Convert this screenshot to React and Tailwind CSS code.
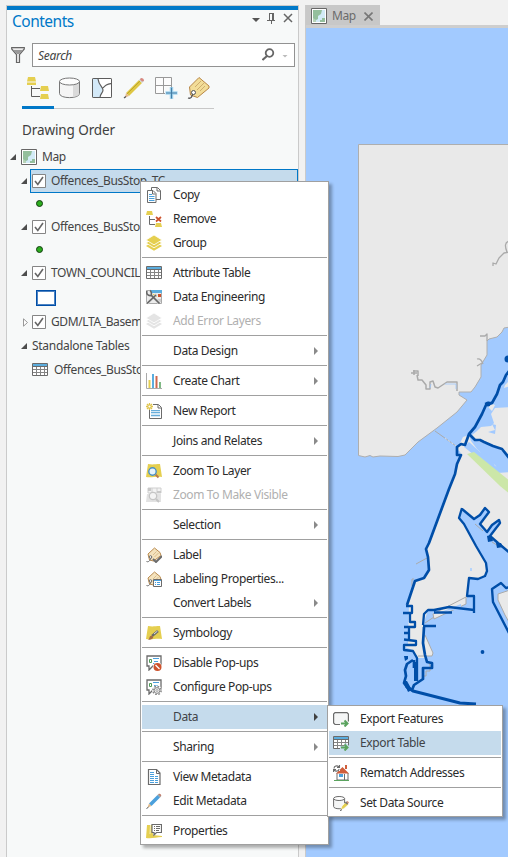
import React from "react";

const Icon = ({ children, size = 16 }) => (
  <svg width={size} height={size} viewBox="0 0 16 16" fill="none" className="block shrink-0">
    {children}
  </svg>
);

const G = "#6b6b6b";
const Y = "#e5cf50";

const Table = ({ arrow }) => (
  <Icon>
    <path d="M.5 1.5h15v12H.5z" fill="#fff" stroke={G} />
    <path d="M1 2h14v2H1z" fill="#5badde" />
    <path d="M0 4.5h16" stroke={G} />
    <path d="M1 7.5h14M1 10.5h14M4.5 5v8M8.5 5v8M12.5 5v8" stroke="#858585" />
    {arrow && <ExportArrow />}
  </Icon>
);

const ExportArrow = () => (
  <>
    <path d="M7 11h4V8.500h3L16 11v4h-2l-2 1h-1v-2H7z" fill="#c5dbec" />
    <path d="M8 12.500h6M11.500 9.500l3 3-3 3" stroke="#5ba35f" strokeWidth="2" />
  </>
);

const Layers = ({ color = Y, bg = "#fff" }) => (
  <Icon>
    <path d="M8 6l8 5-8 4.800L0 11z" fill={color} />
    <path d="M8 3l8 5-8 4.800L0 8z" fill={color} stroke={bg} strokeWidth=".8" />
    <path d="M8 0l8 5-8 4.800L0 5z" fill={color} stroke={bg} strokeWidth=".8" />
  </Icon>
);

const Tag = ({ children }) => (
  <Icon>
    <path d="M2 7L8.500 1l5.500 4.500 1 3L7.500 14l-4-1z" fill="#f5e3bd" stroke="#b98b50" />
    <path d="M7 8l3.500-3.500M8.500 10l4-4" stroke="#d9bd8d" />
    <path d="M.5 14.500c2 1 4-1 4.500-4" stroke={G} />
    <circle cx="4.500" cy="10" r="1.300" fill="#fff" stroke={G} />
    {children}
  </Icon>
);

const Popup = ({ children }) => (
  <Icon>
    <path d="M1 1h14v10H7l-4 4v-4H1z" fill="#fff" stroke={G} strokeWidth="1.300" />
    <path d="M3.500 4.500h2v3h-2z" stroke="#4f9a59" />
    <path d="M7 3.500h6M8 6.500h4M7 8.500h2" stroke="#4ba0dc" />
    {children}
  </Icon>
);

const icons = {
  copy: (
    <Icon>
      <path d="M5.500.5h6l3 3v9h-9z" fill="#fff" stroke={G} />
      <path d="M11 1v3h3" stroke={G} />
      <path d="M1.500 3.500H7l3 3v9H1.500z" fill="#fff" stroke={G} />
      <path d="M6.500 4v3h3" stroke={G} />
      <path d="M3 7.500h3M3 9.500h5.500M3 11.500h5.500M3 13.500h5.500" stroke="#4ba0dc" />
    </Icon>
  ),
  remove: (
    <Icon>
      <path d="M1 0h5l1 4H0z" fill={Y} />
      <path d="M3.500 5v8.500H9M3.500 8.500H9" stroke={G} />
      <path d="M10 12h5l1 4H9z" fill={Y} />
      <path d="M10 6l5 4.500M15 6l-5 4.500" stroke="#cd522c" strokeWidth="1.700" />
    </Icon>
  ),
  group: <Layers />,
  table: <Table />,
  engineering: (
    <Icon>
      <path d="M.5 1.500h15v13H.5z" fill="#ececec" stroke="#aaa" />
      <path d="M5 1h11v3H5z" fill="#5badde" />
      <path d="M7 5h4v3H7z" fill={Y} />
      <path d="M12 5h3v3h-3z" fill="#cd522c" />
      <path d="M10 10h5v3h-5z" fill="#ccc" />
      <path d="M1 14.500L11 5M5 6l8 8" stroke="#ddd" strokeWidth="3" />
      <path d="M1 14.500L10 6M5 6l8.500 8.500" stroke="#666" strokeWidth="1.700" />
      <path d="M1 2c-1 3 1 5 4 4.500 1-2 0-4.500-1-5" stroke="#666" strokeWidth="1.600" />
    </Icon>
  ),
  error: <Layers color="#e4e4e4" />,
  chart: (
    <Icon>
      <path d="M.5 0v15.500H16" stroke="#aaa" />
      <path d="M2.500 7h2v8h-2z" fill={Y} />
      <path d="M6 1h2v14H6z" fill="#5badde" />
      <path d="M9.500 3h2v12h-2z" fill="#cf674d" />
      <path d="M13 9h2v6h-2z" fill="#80b985" />
    </Icon>
  ),
  report: (
    <Icon>
      <path d="M3.500 1.500h9l3 3v11h-12z" fill="#fff" stroke={G} />
      <path d="M12 2v3h3" stroke={G} />
      <path d="M5 7h9v7H5z" fill="#d5e8f5" />
      <path d="M5 7.500h9M5 9.500h9M5 12.500h9" stroke="#69aeda" />
      <path d="M0 0h7v7H0z" fill="#fff" />
      <path d="M3.500 0v7M0 3.500h7M1 1l5 5M6 1L1 6" stroke="#dfc44d" strokeWidth="1.300" />
      <circle cx="3.500" cy="3.500" r="1.100" fill="#fff" />
    </Icon>
  ),
  zoom: (
    <Icon>
      <path d="M2 1c5 1 7 0 12 0l2 13c-6-1-10 1-16 0z" fill={Y} />
      <path d="M9.500 11.500l3 3" stroke="#b77a4b" strokeWidth="2" />
      <circle cx="6.500" cy="8.500" r="3.700" fill="#e7f4fb" stroke="#478fc6" strokeWidth="1.400" />
    </Icon>
  ),
  visible: (
    <Icon>
      <path d="M1 7h14v8H0z" fill="#e2e2e2" />
      <path d="M2 1h13v5H2zM6 1v5M11 1v5" fill="#f3f3f3" stroke="#cfcfcf" />
      <path d="M2 1h3v3H2zM11 4h4v2h-4z" fill="#c8c8c8" />
      <path d="M10 12l3 3" stroke="#c5c5c5" strokeWidth="2" />
      <circle cx="7" cy="9" r="3.700" fill="#f4f4f4" stroke="#c5c5c5" strokeWidth="1.300" />
    </Icon>
  ),
  label: (
    <Tag>
      <path d="M7 12l3 3 6-6" stroke={G} strokeWidth="2" />
    </Tag>
  ),
  labelProps: (
    <Tag>
      <path d="M7.500 8.500h8v7h-8z" fill="#fff" stroke={G} />
      <path d="M8 9h7v1H8z" fill="#4ba0dc" />
      <path d="M9 11.500h1m1 0h3M9 13.500h1m1 0h3" stroke="#4ba0dc" />
    </Tag>
  ),
  symbology: (
    <Icon>
      <path d="M2 1c5 1 7 0 12 0l2 13c-6-1-10 1-16 0z" fill={Y} />
      <path d="M6 11l6-5" stroke={G} strokeWidth="2.400" />
      <path d="M8 9l3.500-3" stroke="#ddd" />
      <path d="M2 15c2-1 1-5 4-4s0 4-4 4z" fill="#a66d42" />
    </Icon>
  ),
  disable: (
    <Popup>
      <circle cx="11.500" cy="12" r="4.700" fill="#fff" />
      <circle cx="11.500" cy="12" r="4" fill="#cd522c" />
      <path d="M9.500 10l4 4" stroke="#fff" strokeWidth="1.300" />
    </Popup>
  ),
  configure: (
    <Popup>
      <circle cx="11" cy="11.500" r="5" fill="#fff" />
      <circle cx="11" cy="11.500" r="4.100" stroke="#888" strokeWidth="1.600" strokeDasharray="1.700 1.520" />
      <circle cx="11" cy="11.500" r="2.900" fill="#eee" stroke="#888" />
      <circle cx="11" cy="11.500" r="1" fill="#fff" stroke="#888" strokeWidth=".7" />
    </Popup>
  ),
  metadata: (
    <Icon>
      <path d="M2.500.5h8l3.500 3.500v11.500H2.500z" fill="#fff" stroke={G} strokeWidth="1.200" />
      <path d="M10.500 1v3.500H14" stroke={G} />
      <path d="M4 3.500h4M4 5.500h4M4 7.500h4m1 0h3M4 9.500h4m1 0h3M4 11.500h4m1 0h3M4 13.500h4m1 0h3" stroke="#4ba0dc" />
    </Icon>
  ),
  edit: (
    <Icon>
      <path d="M3 10.500L11.500 2l2.500 2.500L5.500 13z" fill="#4ba0dc" />
      <path d="M11.500 2l1-1 2.500 2.500-1 1z" fill="#999" />
      <path d="M12.500 1C14 0 16 2 15 3.500z" fill="#b9705e" />
      <path d="M3 10.500L5.500 13l-4 1.500z" fill="#deb887" />
      <path d="M.5 15.500l2-1.300" stroke="#555" />
    </Icon>
  ),
  properties: (
    <Icon>
      <path d="M1 2h5l1 10 9 1v1c-6 0-10 2-16 1z" fill={Y} />
      <path d="M4.500 2L4 11" stroke="#f6eebc" />
      <path d="M6 1.500h9.500v8h-5L8 12V9.500H6z" fill="#fff" stroke={G} strokeWidth="1.200" />
      <path d="M8 3.500h1m1 0h4M8 5.500h1m1 0h4M8 7.500h1m1 0h3" stroke={G} />
    </Icon>
  ),
  exportFeatures: (
    <Icon>
      <path d="M7 13.500H2L.6 12V3L2 1.600h12L15.400 3v7.500" fill="#f5f6f6" stroke={G} strokeWidth="1.200" />
      <path d="M8 12.500h6M11.500 9.500l3 3-3 3" stroke="#5ba35f" strokeWidth="2" />
    </Icon>
  ),
  exportTable: <Table arrow />,
  rematch: (
    <Icon>
      <path d="M4 8v7h11V8" fill="#fff" stroke={G} />
      <path d="M12 0h2v4h-2zM3 8.500L9.500 2 16 8.500z" fill="#cf5e3c" />
      <path d="M6 9h4v3H6z" fill="#4ba0dc" />
      <path d="M11.500 9v6" stroke={G} />
      <path d="M1 15.500h15" stroke="#5ba35f" />
      <path d="M0 0h7v6H0z" fill="#fff" />
      <path d="M1 3.500C1 1 4 0 6 2M6.500 0v2.500H4M6 4c0 2-3 3-5 1M.5 7V4.500H3" stroke={G} strokeWidth="1.100" />
    </Icon>
  ),
  source: (
    <Icon>
      <path d="M.6 3.500v8c0 3 11 3 11 0v-8" fill="#f5f6f6" stroke={G} />
      <ellipse cx="6.100" cy="3.500" rx="5.500" ry="2" fill="#fff" stroke={G} />
      <path d="M7.500 15l1.500-4 4-4 2.500 2.500-4.500 4z" fill={Y} stroke="#fff" strokeWidth=".6" />
      <path d="M12.500 7l2.200 2.200" stroke="#777" strokeWidth="1.800" />
      <path d="M14 6.500l1.500 1.500" stroke="#cf8a72" strokeWidth="1.500" />
      <path d="M7 15.500l2-.8" stroke="#555" />
    </Icon>
  ),
};

const mainMenu = [
  { t: "Copy", i: "copy" },
  { t: "Remove", i: "remove" },
  { t: "Group", i: "group" },
  null,
  { t: "Attribute Table", i: "table" },
  { t: "Data Engineering", i: "engineering" },
  { t: "Add Error Layers", i: "error", off: true },
  null,
  { t: "Data Design", sub: true },
  null,
  { t: "Create Chart", i: "chart", sub: true },
  null,
  { t: "New Report", i: "report" },
  null,
  { t: "Joins and Relates", sub: true },
  null,
  { t: "Zoom To Layer", i: "zoom" },
  { t: "Zoom To Make Visible", i: "visible", off: true },
  null,
  { t: "Selection", sub: true },
  null,
  { t: "Label", i: "label" },
  { t: "Labeling Properties...", i: "labelProps" },
  { t: "Convert Labels", sub: true },
  null,
  { t: "Symbology", i: "symbology" },
  null,
  { t: "Disable Pop-ups", i: "disable" },
  { t: "Configure Pop-ups", i: "configure" },
  null,
  { t: "Data", sub: true, active: true },
  null,
  { t: "Sharing", sub: true },
  null,
  { t: "View Metadata", i: "metadata" },
  { t: "Edit Metadata", i: "edit" },
  null,
  { t: "Properties", i: "properties" },
];

const dataMenu = [
  { t: "Export Features", i: "exportFeatures" },
  { t: "Export Table", i: "exportTable", active: true },
  null,
  { t: "Rematch Addresses", i: "rematch" },
  null,
  { t: "Set Data Source", i: "source" },
];

const Menu = ({ items, className }) => (
  <div className={`absolute border border-[#a0a0a0] bg-white py-px shadow-[3px_3px_3px_rgba(0,0,0,0.3)] ${className}`}>
    {items.map((m, k) =>
      m === null ? (
        <div key={k} className="h-1.5 pt-0.5">
          <div className="mx-px h-px bg-[#a0a0a0]" />
        </div>
      ) : (
        <div
          key={k}
          className={`mx-px flex h-6 items-center pl-1 pr-[9px] ${m.active ? "bg-[#c5dbec]" : ""} ${
            m.off ? "text-[#b0b0b0]" : m.active ? "text-[#404347]" : "text-[#2b2b2b]"
          }`}
        >
          <div className="w-[27px]">{m.i && icons[m.i]}</div>
          <span className="flex-1 whitespace-nowrap">{m.t}</span>
          {m.sub && (
            <svg width="4" height="8" viewBox="0 0 4 8">
              <path d="M0 0l4 4-4 4z" fill={m.active ? "#404040" : "#8a8a8a"} />
            </svg>
          )}
        </div>
      )
    )}
  </div>
);

const MapIcon = () => (
  <svg width="16" height="16" viewBox="0 0 16 16" className="block shrink-0">
    <path d="M.5.5h15v15H.5z" fill="#fff" stroke="#666" />
    <path d="M2 2h12v12H2z" fill="#94bf9d" />
    <path d="M11 2h3v8h-3v2H9v2H5v-2l2-1V8l3-2z" fill="#d2ebf7" />
    <path d="M2 10l3 2v2H2z" fill="#b7d4b8" />
  </svg>
);

const Caret = ({ closed }) =>
  closed ? (
    <svg width="6" height="9" viewBox="0 0 6 9" className="ml-[2px] block shrink-0">
      <path d="M.5.8v7.400L4.500 4.500z" fill="#fff" stroke="#999" />
    </svg>
  ) : (
    <svg width="6" height="6" viewBox="0 0 6 6" className="block shrink-0">
      <path d="M6 0v6H0z" fill="#4d4d4d" />
    </svg>
  );

const Check = () => (
  <svg width="14" height="14" viewBox="0 0 14 14" className="block shrink-0">
    <path d="M.5.5h13v13H.5z" fill="#fff" stroke="#858585" />
    <path d="M3 7L5.800 10.500 11 3" fill="none" stroke="#666" strokeWidth="1.600" />
  </svg>
);

const Row = ({ label, closed }) => (
  <div className="flex h-6 shrink-0 items-center whitespace-nowrap pl-[14px]">
    <div className="w-[11px]">
      <Caret closed={closed} />
    </div>
    <Check />
    <span className="ml-[5px]">{label}</span>
  </div>
);

const Dot = () => (
  <div className="flex h-[22px] shrink-0 items-center pb-px pl-[29px]">
    <div className="size-[7px] rounded-full border border-[#123d10] bg-[#2cae1e]" />
  </div>
);

const Toolbar = () => (
  <div className="ml-[15px] flex h-[34px] w-48 shrink-0 border-b border-[#c8c8c8]">
    <div className="h-[34px] w-8 border-b-[3px] border-[#0078c8]">
      <svg width="32" height="30" viewBox="22 75 32 30" fill="none">
        <path d="M28 77h7l1 4.500h-9zM27 82.500h9V85h-9zM41 86h7l1 5h-9zM41 94h7l1 5h-9z" fill={Y} />
        <path d="M31.500 86v10.500H40M31.500 88.500H40" stroke="#5c5c5c" />
      </svg>
    </div>
    <svg width="160" height="30" viewBox="54 75 160 30" fill="none">
      <path d="M59.500 81.500v12c0 5.500 20 5.500 20 0v-12" fill="#f5f5f5" stroke="#777" />
      <path d="M73 84l6-2v12c-1 2-3 2.500-6 3z" fill="#dadada" />
      <ellipse cx="69.500" cy="81.500" rx="10" ry="3.500" fill="#fcfcfc" stroke="#777" />
      <rect x="92.500" y="78.500" width="19" height="19" rx="1" fill="#fff" stroke="#666" />
      <path d="M93 79h5l3 8 2 2-3 8h-7z" fill="#d3e9f8" />
      <path d="M98 79c1 7 5 8 5 11s-3 4-3 7.500M103 88c3-4 5-4 8.500-4.500" stroke="#5c5c5c" strokeWidth="1.200" />
      <rect x="92.500" y="78.500" width="19" height="19" rx="1" stroke="#5c5c5c" />
      <path d="M126 93l13-13 3 3-13 13z" fill="#dfc744" />
      <path d="M127 94l13-13" stroke="#bca62d" />
      <path d="M139 80l2-2 3 3-2 2z" fill="#cfd4d5" />
      <path d="M141 78c2 0 3 1 3 3l-2 .5-2-2z" fill="#d98880" />
      <path d="M126 93l3 3-4 1.500z" fill="#e4b98c" />
      <path d="M124 98l2-1.500" stroke="#555" strokeWidth="1.300" />
      <path d="M155.500 77.500h16v16h-16zM163.500 77v17M155 85.500h17" fill="#fcfcfc" stroke="#999" />
      <path d="M165 87h13v13h-13z" fill="#f7f9f9" />
      <path d="M171.500 87v12M165.500 93h12" stroke="#a8d8f1" strokeWidth="3.500" />
      <path d="M171.500 87.500v11M166 93h11" stroke="#437da5" strokeWidth="1.200" />
      <path d="M189.500 87l9.500-9.500 10 8.500v2l-11.500 9.500-7-2.500z" fill="#f2dd98" stroke="#b88645" />
      <path d="M195 87l6-6M197 90l7-7M200 91l5-5" stroke="#c9a668" strokeWidth=".9" />
      <path d="M188 98c3 1 4-1 5-5" stroke="#555" strokeWidth="1.300" />
      <circle cx="193.500" cy="92.500" r="2" fill="#fff" stroke="#555" />
    </svg>
  </div>
);

const LAND = "#e9e9e9";
const SEA = "#a2caff";
const NAVY = "#004ea8";

const MapView = () => (
  <svg width="202" height="829" viewBox="306 28 202 829" fill="none" className="block">
    <path d="M306 28h202v829H306z" fill={SEA} />
    {/* northern mainland */}
    <path
      d="M358.500 144.500H510V327L504 328 502 332 497 337 489 339 487 341V355L481 365V377L475 387 471 392H459V395L467 400 457 412 437 428 418 442 405 455 398 456.500 380 456 373 457 370 455.500 365 457 358.500 455.500Z"
      fill={LAND}
      stroke="#aeaeae"
    />
    <g stroke="#aaa" strokeLinejoin="round">
      <path d="M510 252L504 253 499 258 496 264 493 263V266M510 241C504 242 505 247 507 252" strokeWidth="1.300" />
      <path d="M480 336H485L487 334V341M477 359C480 358 482 361 483 364M477 366L482 363" strokeWidth="1.300" />
      <path
        d="M411 373H417M414 370V375M413 371H418V376M417 375L418 380 422 380 426 385V389H430V382L433 381 435 387 438 388 447 382H457V391"
        strokeWidth="1.500"
      />
      <path d="M435 431L456 446" />
      <path d="M445 438L456 446" stroke="#ddd" strokeDasharray="2 2" />
    </g>
    <path d="M445 384H456V389M431 384L430 388" stroke="#9fc7fb" strokeWidth=".8" />
    {/* north-east shore */}
    <path d="M510 407L495 408 491 414 494 423 491 426 481 427 477 431 472 435 477 441 493 446 502 451 510 459V471L501 472 494 464 485 457 477 449 471 441 469 435 463 437 457 449 510 498Z" fill={LAND} />
    <path d="M510 380L505 385 504 388 510 386ZM487 402L495 405 492 411 489 408Z" fill={LAND} />
    <path d="M492 424L496 425 495 434 488 432 495 430Z" fill={SEA} />
    {/* southern peninsula */}
    <path
      d="M457 464L462 448 468 447 478 456 488 460 497 473 510 480V553L501 546 490 538 500 521 497 520 487 532 480 524 489 512 485 508 474 519 462 509 459 518 464 524 476 546 486 563 487 571 485 576 478 579H469L467 596V598L455 606 434 610H428L423 625 426 658H418L412 650 403 646V644H408L409 606H407L415 582 424 578 429 570V558L426 549 429 543 448 490Z"
      fill={LAND}
    />
    <path d="M464 447L469 442 480 452 490 455 495 466 510 469V472L497 473 488 466 478 458Z" fill={SEA} />
    <path d="M467 454L474 452 510 481V494L500 486Z" fill="#cce7a8" />
    {/* harbour structures */}
    <g stroke="#aaa">
      <path d="M433 614L466 597V604L434 619ZM425 623L434 617" fill={LAND} />
      <path d="M425 635L433 653 432 656H418" fill={LAND} />
      <path d="M427 660L430 665V671H426V676H424M416 564L427 558M412 579H414M412 579V586M475 524L483 531M492 542L500 547" />
    </g>
    <path d="M436 614L461 604V609L445 611Z" fill={SEA} />
    <path d="M510 590L498 594V600L505 615 510 624Z" fill={LAND} stroke="#aaa" />
    <path d="M470 568h2v3h-2z" fill="#b5d4fb" />
    {/* town council boundary */}
    <g stroke={NAVY} strokeWidth="2.700" strokeLinejoin="round" strokeLinecap="butt">
      <path d="M510 370L506 375 503 382 500 385 497 394 492 403 486 405 482 414 475 427 469 434 465 445 461 444 457 447 457 455 461 455 457 464 455 474 449 489 429 543 426 549 428 557 429 570 424 578 415 581 407 605" />
      <path d="M469 434L475 440 480 440 484 442 493 446 502 449 510 459M485 404L489 403 492 403" />
      <path d="M406 606H412V613H403M410 613V622H415V627H404M409 627V639M404 633H409M404 639.500L416 641V645H404V650L413 651 417 658V681" strokeWidth="2.300" />
      <path d="M413 660L407 664 405 670 406 676 404 683 409 690M414 660V668" />
      <path d="M462 508L459 518 464 524 476 546 486 563 487 571 485 576 478 579 469 578 467 596H474V613M474 610L449 607 434 610H428L424 614 423 625M434 612.500H452M423 626H436" strokeWidth="2.300" />
      <path d="M424 627L423 643 425 655 427 662 432 663V668H423V679L414 685 412 690" />
      <path d="M462 509L474 519 480 515 485 508 489 512 480 524 487 532 492 525 499 520 500 523 490 536 498 543 510 553" strokeWidth="2.400" />
      <path d="M510 587L506 588 501 583 492 589 493 602 510 635" strokeWidth="2.400" />
      <path d="M406 686L413 691 460 703 476 704" strokeWidth="3" />
    </g>
    <path d="M487 536L491 535 493 541 488 542ZM496 543L501 543 503 547 497 548ZM404 656H408V659L405 661Z" fill={NAVY} />
    <path d="M414 662h3v19h-3zM404 681h3l5 9-4 2z" fill={NAVY} />
    <circle cx="488" cy="404" r="2.500" fill={NAVY} />
    <circle cx="508" cy="359" r="3.500" fill={NAVY} />
    <circle cx="482.500" cy="652" r="1.900" fill={NAVY} />
  </svg>
);

export default function App() {
  return (
    <div className="relative flex h-[857px] w-[508px] overflow-hidden bg-[#f1f1f1] pt-[5px] font-['Noto_Sans','Open_Sans',sans-serif] text-[12px] leading-none tracking-[-0.38px] text-[#444]">
      <div className="ml-1.5 flex w-[293px] shrink-0 flex-col border-x border-[#cacaca] bg-[#f7f9f9]">
        <div className="h-[5px] shrink-0 border-t border-[#cacaca] bg-[#0078c8]" />
        <div className="flex h-[33px] shrink-0 justify-between pl-[5px] pt-[3px]">
          <span className="text-[15.5px] leading-[17px] tracking-[-0.5px] text-[#0078c8]">Contents</span>
          <svg width="46" height="16" viewBox="252 13 46 16" fill="none">
            <path d="M252 18h8l-4 4z" fill="#555" />
            <path d="M269.500 14v6M273.500 14v6M269 13.500h5M267 20.500h8M271.500 21v3M272.500 14v6" stroke="#666" />
            <path d="M284 14l8 8M292 14l-8 8" stroke="#666" strokeWidth="1.500" />
          </svg>
        </div>
        <div className="flex h-6 shrink-0 items-center pl-1">
          <svg width="14" height="16" viewBox="0 0 14 16" className="mr-[7px] shrink-0">
            <path d="M.7.7h12.600v1.300L8.500 7.500v8h-3v-8L.7 2z" fill="#eee" stroke="#666" strokeWidth="1.200" />
            <path d="M2 3h10L8 7H6z" fill="#999" />
          </svg>
          <div className="flex h-6 w-[263px] items-center border border-[#929292] bg-white pl-[5px]">
            <span className="flex-1 pt-px text-[12px] italic tracking-[-0.3px] text-[#444]">Search</span>
            <svg width="32" height="14" viewBox="0 0 32 14" fill="none">
              <circle cx="7.500" cy="5" r="3.800" stroke="#666" strokeWidth="1.800" />
              <path d="M5 8l-4.500 4" stroke="#666" strokeWidth="2" />
              <path d="M20.500 7h5l-2.500 2.500z" fill="#bbb" />
            </svg>
          </div>
        </div>
        <div className="h-2 shrink-0" />
        <Toolbar />
        <div className="flex h-[35px] shrink-0 items-center pl-[15px] pt-[9px] text-[13.5px] tracking-[-0.1px] text-[#404040]">Drawing Order</div>
        <div className="flex h-[25px] shrink-0 items-center pl-[3px]">
          <Caret />
          <div className="w-[5px]" />
          <MapIcon />
          <span className="ml-[5px]">Map</span>
        </div>
        <div className="relative h-6 shrink-0">
          <div className="ml-[23px] h-6 w-[268px] border border-[#0078c8] bg-[#c5dbec]" />
          <div className="absolute inset-x-0 top-0">
            <Row label="Offences_BusStop_TC" />
          </div>
        </div>
        <Dot />
        <Row label="Offences_BusStop" />
        <Dot />
        <Row label="TOWN_COUNCIL" />
        <div className="flex h-[25px] shrink-0 items-center pl-[29px]">
          <div className="h-4 w-5 border-[1px] border-[#004ea8] bg-white outline outline-1 -outline-offset-2 outline-[#4d83c2]" />
        </div>
        <Row label="GDM/LTA_Basemap" closed />
        <div className="flex h-6 shrink-0 items-center pl-[14px]">
          <div className="w-[11px]">
            <Caret />
          </div>
          <span className="tracking-[-0.28px]">Standalone Tables</span>
        </div>
        <div className="flex h-6 shrink-0 items-center pl-[25px]">
          <Table />
          <span className="ml-[6px]">Offences_BusStop</span>
        </div>
      </div>

      <div className="ml-1.5 flex w-[203px] flex-col border-l border-[#cacaca]">
        <div className="flex h-5 w-[74px] items-center bg-[#c8c8c8] pl-[5px] pt-[2px] text-[#6b6b6b]">
          <MapIcon />
          <span className="ml-[5px] w-8">Map</span>
          <svg width="9" height="9" viewBox="0 0 9 9">
            <path d="M.5.5l8 8M8.500.5l-8 8" stroke="#777" strokeWidth="1.600" />
          </svg>
        </div>
        <div className="h-[3px] shrink-0 bg-[#cecece]" />
        <MapView />
      </div>

      <Menu items={mainMenu} className="left-[140px] top-[181px] w-[189px]" />
      <Menu items={dataMenu} className="left-[327px] top-[705px] w-[176px]" />
    </div>
  );
}
